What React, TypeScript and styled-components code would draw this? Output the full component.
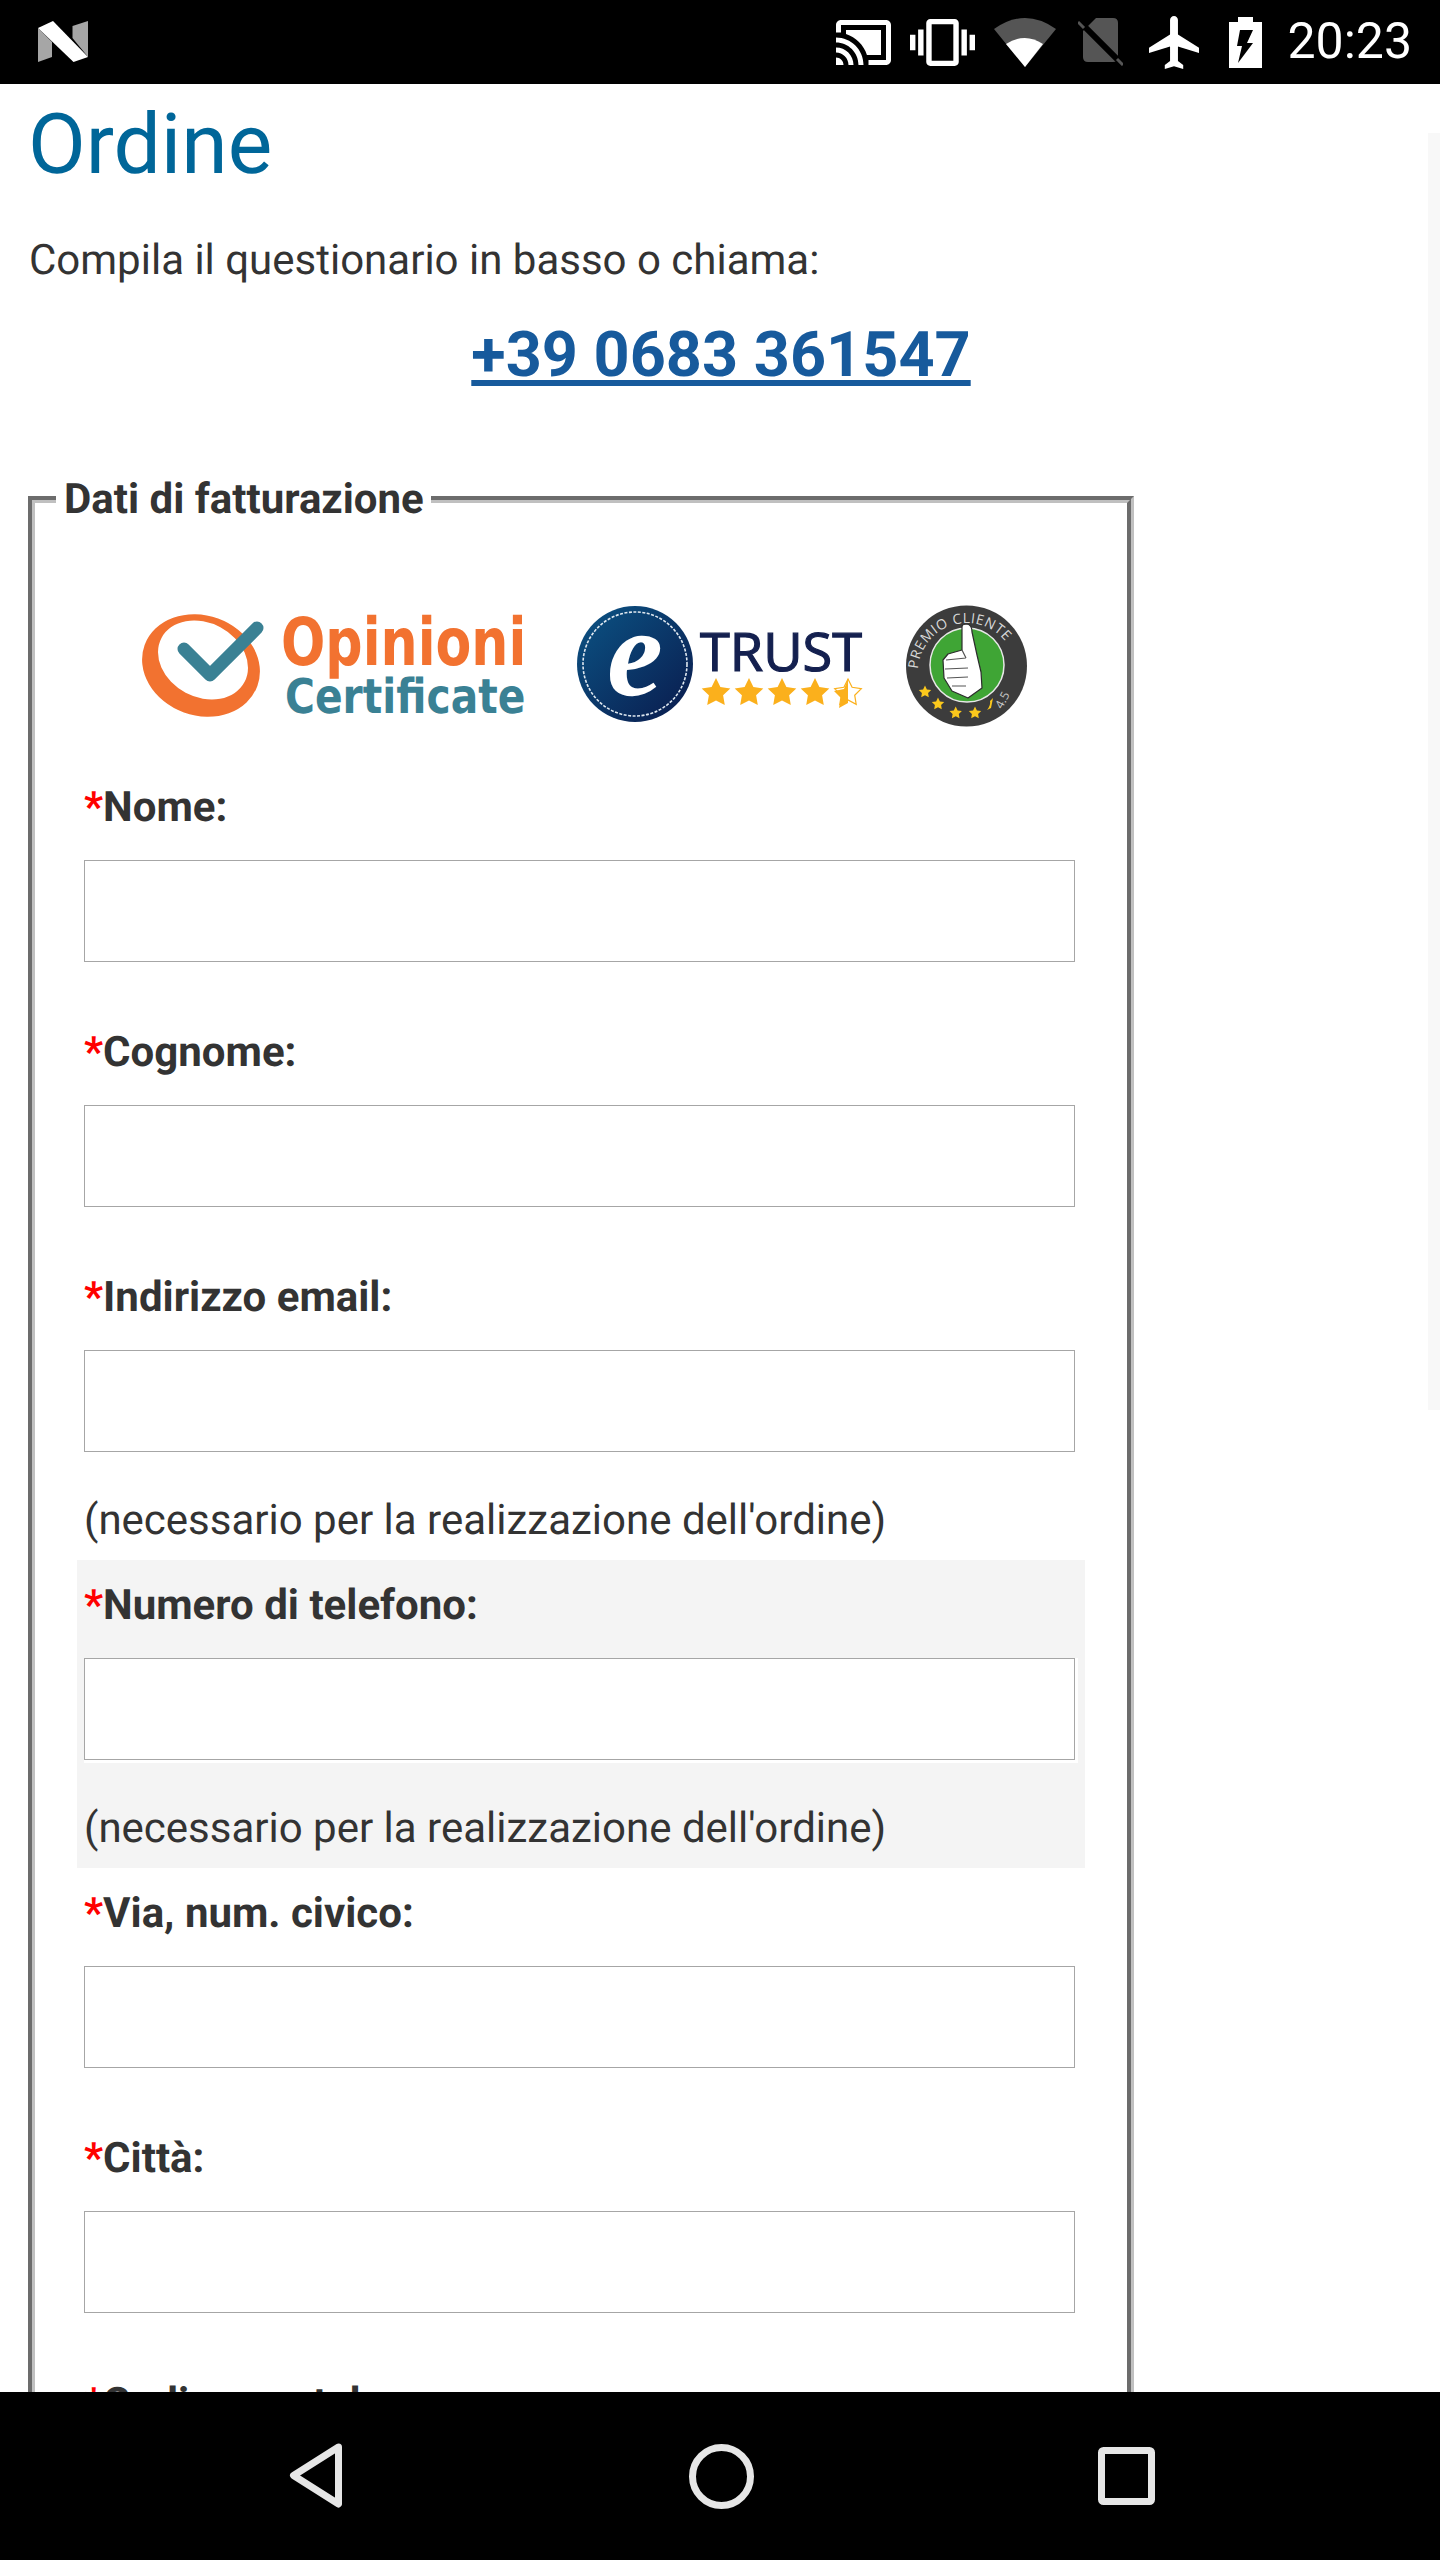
import styled, { createGlobalStyle } from "styled-components";

const GlobalStyle = createGlobalStyle`
  html, body {
    margin: 0;
    padding: 0;
    background: #fff;
  }
  body {
    font-family: Roboto, "Liberation Sans", sans-serif;
    color: #333;
    text-rendering: geometricPrecision;
  }
`;

const Screen = styled.div`
  position: relative;
  width: 1440px;
  height: 2560px;
  display: flex;
  flex-direction: column;
  overflow: hidden;
`;

const StatusBar = styled.header`
  height: 84px;
  flex: none;
  background: #000;
  display: flex;
  align-items: center;
  padding: 0 28px 0 38px;
`;

const StatusIcons = styled.div`
  margin-left: auto;
  display: flex;
  align-items: center;
`;

const StatusIcon = styled.svg<{ $gap?: number }>`
  display: block;
  flex: none;
  margin-left: ${(props) => props.$gap ?? 0}px;
`;

const Clock = styled.span`
  margin-left: 25px;
  color: #fff;
  font-size: 50px;
  line-height: 84px;
`;

const Main = styled.main`
  flex: 1;
  min-height: 0;
  overflow: hidden;
  padding: 0 28px;
`;

const Rail = styled.div`
  position: absolute;
  top: 133px;
  right: 0;
  width: 12px;
  height: 1277px;
  background: #f8f8f8;
`;

const Title = styled.h1`
  margin: 0;
  height: 124px;
  color: #006699;
  font-size: 84px;
  font-weight: 400;
  line-height: 122px;
`;

const Intro = styled.p`
  margin: 0 0 0 1px;
  height: 106px;
  font-size: 42px;
  line-height: 106px;
`;

const Phone = styled.a`
  display: block;
  padding-left: 2px;
  text-align: center;
  height: 160px;
  color: #175a9c;
  font-size: 63px;
  font-weight: 700;
  line-height: 84px;
  text-decoration: underline;
`;

const Billing = styled.fieldset`
  box-sizing: border-box;
  width: 1106px;
  margin: 0;
  padding: 0 42px;
  border: 7px groove #c0c0c0;
  min-inline-size: 0;
`;

const Legend = styled.legend`
  margin-left: -21px;
  padding: 0 7px 0 8px;
  font-size: 42px;
  font-weight: 700;
  line-height: 51px;
`;

const LogoRow = styled.div`
  height: 237px;
  padding: 79px 0 0 65px;
  box-sizing: border-box;
  display: flex;
  align-items: flex-start;
`;

const Logo = styled.svg<{ $gap?: number }>`
  display: block;
  flex: none;
  overflow: visible;
  margin-left: ${(props) => props.$gap ?? 0}px;
`;

const Row = styled.div<{ $shaded?: boolean }>`
  background: ${(props) => (props.$shaded ? "#f4f4f4" : "transparent")};
  padding: 0 7px;
`;

const Label = styled.label`
  display: block;
  height: 98px;
  font-size: 42px;
  font-weight: 700;
  line-height: 91px;
`;

const Required = styled.span`
  color: #f00;
`;

const InputWrap = styled.div`
  background: #fff;
  padding: 0 3px 3px 0;
`;

const TextInput = styled.input`
  display: block;
  box-sizing: border-box;
  width: 100%;
  height: 102px;
  margin: 0;
  padding: 0 14px;
  background: #fff;
  border: 1px solid #a6a6a6;
  border-radius: 0;
  outline: none;
`;

const Gap = styled.div`
  height: 42px;
`;

const Note = styled.div`
  height: 105px;
  padding-top: 41px;
  box-sizing: border-box;
  font-size: 42px;
  line-height: 50px;
`;

const NavBar = styled.nav`
  height: 168px;
  flex: none;
  background: #000;
  display: flex;
  align-items: center;
  padding: 0 0 0 289px;
`;

const NavIcon = styled.svg<{ $gap?: number }>`
  display: block;
  flex: none;
  margin-left: ${(props) => props.$gap ?? 0}px;
`;

function starPoints(cx: number, cy: number, r: number) {
  const pts: string[] = [];
  for (let i = 0; i < 10; i++) {
    const rad = i % 2 === 0 ? r : r * 0.5;
    const a = (Math.PI / 5) * i - Math.PI / 2;
    pts.push(`${(cx + rad * Math.cos(a)).toFixed(1)},${(cy + rad * Math.sin(a)).toFixed(1)}`);
  }
  return pts.join(" ");
}

const OpinioniLogo = () => (
  <Logo width={388} height={118} viewBox="142 604 388 118">
    <ellipse cx="201" cy="665.5" rx="60" ry="50" transform="rotate(20 201 665.5)" fill="#f27230" />
    <ellipse cx="203" cy="660" rx="47" ry="37" transform="rotate(28 203 660)" fill="#fff" />
    <path
      d="M184 649 L210 675 L257 628"
      fill="none"
      stroke="#3a8194"
      strokeWidth="13"
      strokeLinecap="round"
      strokeLinejoin="round"
    />
    <text
      transform="translate(281 665) scale(0.79 1)"
      fontFamily="'DejaVu Sans', sans-serif"
      fontWeight="700"
      fontSize="66"
      fill="#f27230"
    >
      Opinioni
    </text>
    <text
      transform="translate(285 713) scale(0.85 1)"
      fontFamily="'DejaVu Sans', sans-serif"
      fontWeight="700"
      fontSize="48"
      fill="#3a8194"
    >
      Certificate
    </text>
  </Logo>
);

const TrustLogo = () => (
  <Logo $gap={47} width={288} height={122} viewBox="577 604 288 122">
    <defs>
      <linearGradient id="trustBlue" x1="0" y1="0" x2="1" y2="1">
        <stop offset="0" stopColor="#0b5485" />
        <stop offset="1" stopColor="#0a1a4c" />
      </linearGradient>
    </defs>
    <circle cx="635" cy="664" r="58" fill="url(#trustBlue)" />
    <circle cx="635" cy="664" r="52" fill="none" stroke="#dfe8f0" strokeWidth="1.6" strokeDasharray="3 1.5" />
    <text
      x="635"
      y="695"
      textAnchor="middle"
      fontFamily="'Liberation Serif', serif"
      fontStyle="italic"
      fontWeight="700"
      fontSize="126"
      fill="#fff"
    >
      e
    </text>
    <text
      x="700"
      y="671"
      fontFamily="'Open Sans', sans-serif"
      fontWeight="400"
      fontSize="53"
      fill="#14204f"
      stroke="#14204f"
      strokeWidth="1.2"
      textLength="162"
      lengthAdjust="spacingAndGlyphs"
    >
      TRUST
    </text>
    {[716, 749, 782, 815].map((cx) => (
      <polygon key={cx} points={starPoints(cx, 693, 15)} fill="#fbb01c" />
    ))}
    <polygon points={starPoints(848, 693, 14)} fill="none" stroke="#fbb01c" strokeWidth="1.2" />
    <path d="M848 679 L848 703 L839 708 L841 698 L834 691 L844 689 Z" fill="#fbb01c" />
  </Logo>
);

const PremioLogo = () => (
  <Logo $gap={41} width={122} height={124} viewBox="906 604 122 124">
    <defs>
      <path id="premioArc" d="M 918 672 A 49 49 0 0 1 1016 672" />
    </defs>
    <circle cx="966.5" cy="666" r="60.5" fill="#3c3c3c" />
    <circle cx="967" cy="665" r="37" fill="#3fa535" stroke="#e8e8e8" strokeWidth="1.5" />
    <text fontFamily="'Open Sans', sans-serif" fontSize="14" fill="#d8d8d8" letterSpacing="0.6">
      <textPath href="#premioArc" startOffset="3">
        PREMIO CLIENTE
      </textPath>
    </text>
    <path
      d="M962 627 Q962 624 967 624 Q972 625 972 632 L977 655 L981 672 L982 688 L968 698 L952 691 L944 678 L943 660 L948 654 L962 650 Z"
      fill="#fff"
      stroke="#2c2c2c"
      strokeWidth="1.2"
      strokeLinejoin="round"
    />
    <path
      d="M946 660 L966 658 M945 669 L968 668 M947 678 L968 677 M952 686 L966 686 M962 650 L966 658"
      fill="none"
      stroke="#555"
      strokeWidth="1.2"
    />
    {[
      [925, 692],
      [938, 704],
      [955.7, 713],
      [975, 713],
    ].map(([cx, cy]) => (
      <polygon key={cx} points={starPoints(cx, cy, 6.5)} fill="#fbc81c" />
    ))}
    <path d="M993 698 L991 708 L987 710 Q991 705 990 701 Z" fill="#fbc81c" />
    <text
      x="1006"
      y="702"
      textAnchor="middle"
      transform="rotate(-62 1006 702)"
      fontFamily="'Open Sans', sans-serif"
      fontSize="12"
      fill="#c8c8c8"
    >
      4.5
    </text>
  </Logo>
);

const fields = [
  { label: "Nome:" },
  { label: "Cognome:" },
  { label: "Indirizzo email:", note: true },
  { label: "Numero di telefono:", note: true, shaded: true },
  { label: "Via, num. civico:" },
  { label: "Città:" },
  { label: "Codice postale:" },
];

export default function App() {
  return (
    <Screen>
      <GlobalStyle />
      <StatusBar>
        <StatusIcon width={50} height={42} viewBox="38 21 50 42">
          <polygon points="38,28 38,62 52,57 52,42" fill="#a6a6a6" />
          <polygon points="72.5,26 88,21 88,57 72.5,38" fill="#a6a6a6" />
          <polygon points="38,28 53,21 88,57 73.5,62" fill="#fff" />
        </StatusIcon>
        <StatusIcons>
          <StatusIcon width={55} height={45} viewBox="1 3 22 18" preserveAspectRatio="none" fill="#fff">
            <path d="M21 3H3c-1.1 0-2 .9-2 2v3h2V5h18v14h-7v2h7c1.1 0 2-.9 2-2V5c0-1.1-.9-2-2-2zM1 18v3h3c0-1.66-1.34-3-3-3zm0-4v2c2.76 0 5 2.24 5 5h2c0-3.87-3.13-7-7-7zm0-4v2c4.97 0 9 4.03 9 9h2c0-6.08-4.93-11-11-11z" />
            <path d="M5 7v1.63c3.96 1.28 7.09 4.41 8.37 8.37H19V7z" />
          </StatusIcon>
          <StatusIcon $gap={19} width={65} height={47} viewBox="0 3 24 18" preserveAspectRatio="none" fill="#fff">
            <path d="M0 15h2V9H0v6zm3 2h2V7H3v10zm19-8v6h2V9h-2zm-3 8h2V7h-2v10zM16.5 3h-9C6.67 3 6 3.67 6 4.5v15c0 .83.67 1.5 1.5 1.5h9c.83 0 1.5-.67 1.5-1.5v-15c0-.83-.67-1.5-1.5-1.5zM16 19H8V5h8v14z" />
          </StatusIcon>
          <StatusIcon $gap={19} width={62} height={49} viewBox="994 17 62 49">
            <path d="M1025 66 L994 28 Q1025 6 1056 28 Z" fill="#555" />
            <path d="M1025 66 L1006 43 Q1025 31 1043 43 Z" fill="#fff" />
          </StatusIcon>
          <StatusIcon $gap={22} width={45} height={48} viewBox="1078 19 45 48">
            <path d="M1096 19 H1113 Q1118 19 1118 24 V58 Q1118 63 1113 63 H1088 Q1083 63 1083 58 V32 Z" fill="#555" />
            <line x1="1078" y1="21" x2="1123" y2="66" stroke="#000" strokeWidth="6" />
            <line x1="1078" y1="23" x2="1084" y2="29" stroke="#555" strokeWidth="3" />
            <line x1="1117" y1="60" x2="1123" y2="66" stroke="#555" strokeWidth="3" />
          </StatusIcon>
          <StatusIcon $gap={26} width={50} height={53} viewBox="2 2 19 20" preserveAspectRatio="none" fill="#fff">
            <path d="M21 16v-2l-8-5V3.5c0-.83-.67-1.5-1.5-1.5S10 2.67 10 3.5V9l-8 5v2l8-2.5V19l-2 1.5V22l3.5-1 3.5 1v-1.5L13 19v-5.5l8 2.5z" />
          </StatusIcon>
          <StatusIcon $gap={30} width={33} height={51} viewBox="1229 16 33 51">
            <path d="M1238 16 H1253 V21 H1262 V67 H1229 V21 H1238 Z" fill="#fff" />
            <path d="M1240 29 H1253 L1247 42 H1253 L1238 62 L1242 45 H1237 Z" fill="#000" />
          </StatusIcon>
          <Clock>20:23</Clock>
        </StatusIcons>
      </StatusBar>
      <Rail />
      <Main>
        <Title>Ordine</Title>
        <Intro>Compila il questionario in basso o chiama:</Intro>
        <Phone href="#">+39 0683 361547</Phone>
        <Billing>
          <Legend>Dati di fatturazione</Legend>
          <LogoRow>
            <OpinioniLogo />
            <TrustLogo />
            <PremioLogo />
          </LogoRow>
          {fields.map((field) => (
            <Row key={field.label} $shaded={field.shaded}>
              <Label>
                <Required>*</Required>
                {field.label}
              </Label>
              <InputWrap>
                <TextInput type="text" />
              </InputWrap>
              {field.note ? <Note>(necessario per la realizzazione dell'ordine)</Note> : <Gap />}
            </Row>
          ))}
        </Billing>
      </Main>
      <NavBar>
        <NavIcon width={54} height={66} viewBox="289 2444 54 66">
          <path
            d="M338.5 2448 L293.5 2476.5 L338.5 2505 Z"
            fill="none"
            stroke="#e6e6e6"
            strokeWidth="7"
            strokeLinejoin="round"
          />
        </NavIcon>
        <NavIcon $gap={346} width={65} height={65} viewBox="689 2444 65 65">
          <circle cx="721.5" cy="2476.5" r="29" fill="none" stroke="#e6e6e6" strokeWidth="7" />
        </NavIcon>
        <NavIcon $gap={344} width={57} height={58} viewBox="1097 2447 57 58">
          <rect x="1100.5" y="2450.5" width="50" height="51" rx="2" fill="none" stroke="#e6e6e6" strokeWidth="7" />
        </NavIcon>
      </NavBar>
    </Screen>
  );
}
